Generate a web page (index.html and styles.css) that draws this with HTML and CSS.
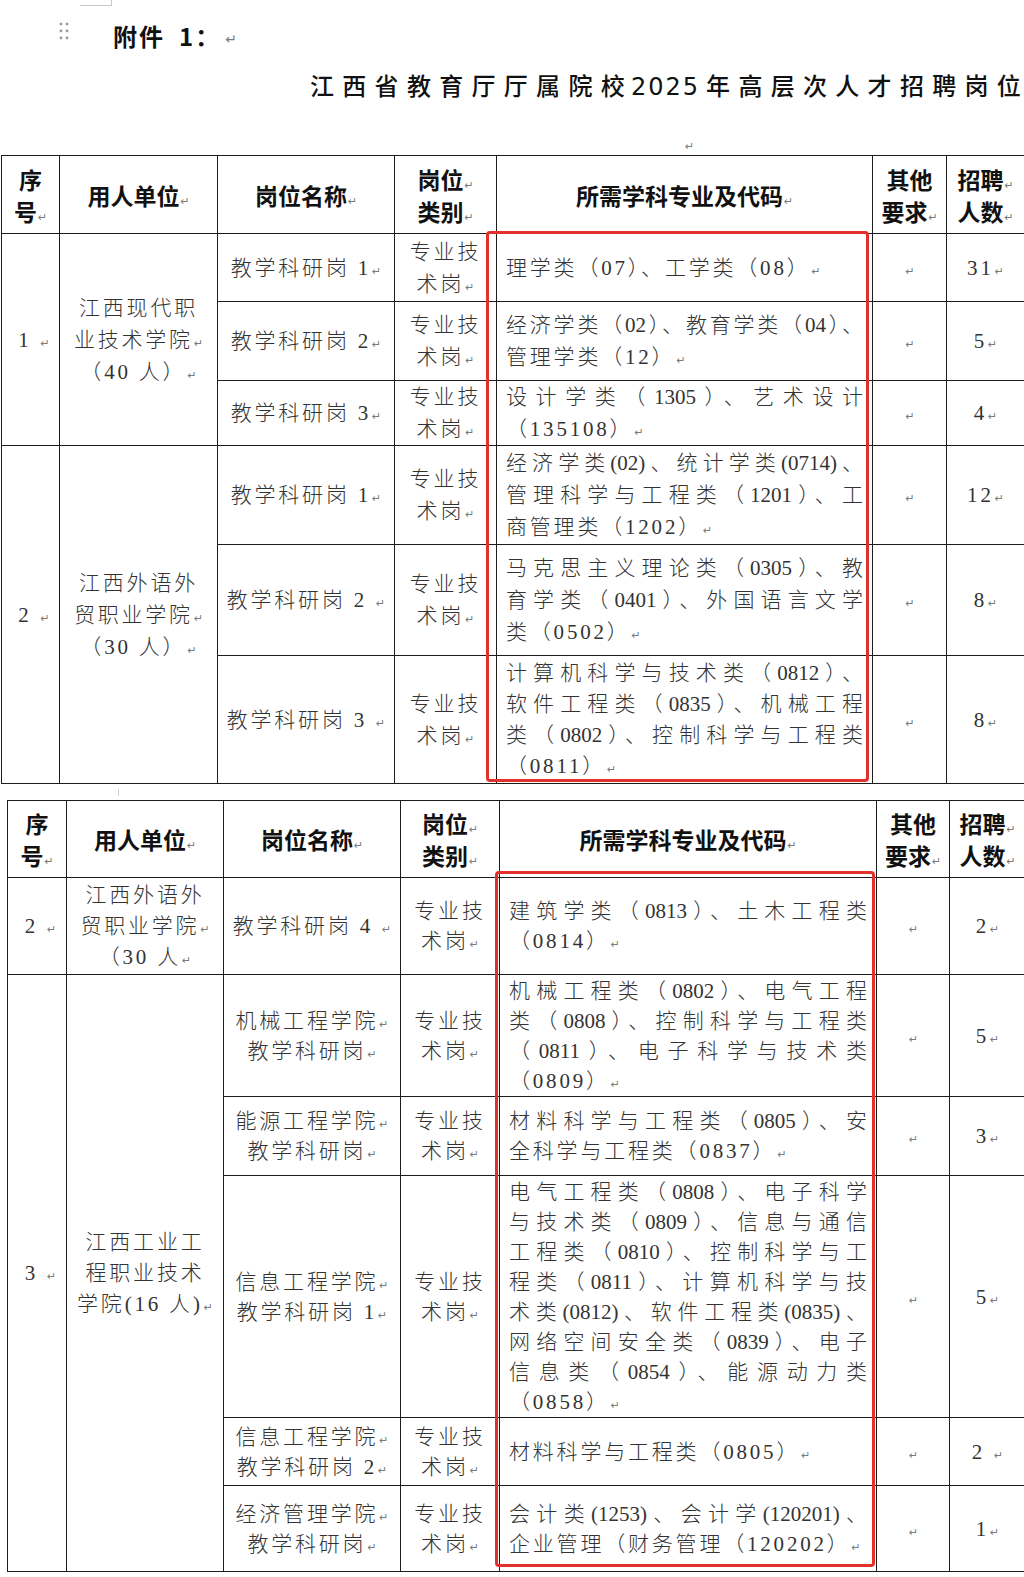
FILE: index.html
```html
<!DOCTYPE html>
<html lang="zh-CN">
<head>
<meta charset="utf-8">
<title>附件 1</title>
<link rel="stylesheet" href="styles.css">
</head>
<body>
<div class="page">
  <div class="corner"></div>
  <div class="annex">
    <svg class="handle" width="10" height="18" viewBox="0 0 10 18"><g fill="#9a9a9a"><circle cx="2" cy="2" r="1.4"/><circle cx="8" cy="2" r="1.4"/><circle cx="2" cy="9" r="1.4"/><circle cx="8" cy="9" r="1.4"/><circle cx="2" cy="16" r="1.4"/><circle cx="8" cy="16" r="1.4"/></g></svg>
    <span class="annex-text">附件&ensp;1：</span><span class="rt big">↵</span>
  </div>
  <div class="title">江西省教育厅厅属院校<span class="yr">2025</span>年高层次人才招聘岗位</div>
  <div class="pmark"><span class="rt">↵</span></div>

  <div class="tblwrap t1">
    <table class="grid">
      <colgroup><col><col><col><col><col><col><col></colgroup>
      <tr class="hd">
        <th>序<br>号<span class="rt">↵</span></th>
        <th>用人单位<span class="rt">↵</span></th>
        <th>岗位名称<span class="rt">↵</span></th>
        <th>岗位<span class="rt">↵</span><br>类别<span class="rt">↵</span></th>
        <th>所需学科专业及代码<span class="rt">↵</span></th>
        <th>其他<br>要求<span class="rt">↵</span></th>
        <th>招聘<span class="rt">↵</span><br>人数<span class="rt">↵</span></th>
      </tr>
      <tr class="ra">
        <td rowspan="3" class="seq">1 <span class="rt">↵</span></td>
        <td rowspan="3">江西现代职<br>业技术学院<span class="rt">↵</span><br>（40 人）<span class="rt">↵</span></td>
        <td>教学科研岗 1<span class="rt">↵</span></td>
        <td>专业技<br>术岗<span class="rt">↵</span></td>
        <td class="subj"><span class="ln">理学类（07）、工学类（08）<span class="rt">↵</span></span></td>
        <td><span class="rt">↵</span></td>
        <td>31<span class="rt">↵</span></td>
      </tr>
      <tr class="rb">
        <td>教学科研岗 2<span class="rt">↵</span></td>
        <td>专业技<br>术岗<span class="rt">↵</span></td>
        <td class="subj"><span class="ln j">经济学类（02）、教育学类（04）、</span><span class="ln">管理学类（12）<span class="rt">↵</span></span></td>
        <td><span class="rt">↵</span></td>
        <td>5<span class="rt">↵</span></td>
      </tr>
      <tr class="rc">
        <td>教学科研岗 3<span class="rt">↵</span></td>
        <td>专业技<br>术岗<span class="rt">↵</span></td>
        <td class="subj"><span class="ln j">设计学类（1305）、艺术设计</span><span class="ln">（135108）<span class="rt">↵</span></span></td>
        <td><span class="rt">↵</span></td>
        <td>4<span class="rt">↵</span></td>
      </tr>
      <tr class="rd">
        <td rowspan="3" class="seq">2 <span class="rt">↵</span></td>
        <td rowspan="3">江西外语外<br>贸职业学院<span class="rt">↵</span><br>（30 人）<span class="rt">↵</span></td>
        <td>教学科研岗 1<span class="rt">↵</span></td>
        <td>专业技<br>术岗<span class="rt">↵</span></td>
        <td class="subj"><span class="ln j">经济学类(02)、统计学类(0714)、</span><span class="ln j">管理科学与工程类（1201）、工</span><span class="ln">商管理类（1202）<span class="rt">↵</span></span></td>
        <td><span class="rt">↵</span></td>
        <td>12<span class="rt">↵</span></td>
      </tr>
      <tr class="re">
        <td>教学科研岗 2 <span class="rt">↵</span></td>
        <td>专业技<br>术岗<span class="rt">↵</span></td>
        <td class="subj"><span class="ln j">马克思主义理论类（0305）、教</span><span class="ln j">育学类（0401）、外国语言文学</span><span class="ln">类（0502）<span class="rt">↵</span></span></td>
        <td><span class="rt">↵</span></td>
        <td>8<span class="rt">↵</span></td>
      </tr>
      <tr class="rf">
        <td>教学科研岗 3 <span class="rt">↵</span></td>
        <td>专业技<br>术岗<span class="rt">↵</span></td>
        <td class="subj"><span class="ln j">计算机科学与技术类（0812）、</span><span class="ln j">软件工程类（0835）、机械工程</span><span class="ln j">类（0802）、控制科学与工程类</span><span class="ln">（0811）<span class="rt">↵</span></span></td>
        <td><span class="rt">↵</span></td>
        <td>8<span class="rt">↵</span></td>
      </tr>
    </table>
    <div class="redbox"></div>
  </div>

  <div class="gap"><span class="tick"></span></div>

  <div class="tblwrap t2">
    <table class="grid">
      <colgroup><col><col><col><col><col><col><col></colgroup>
      <tr class="hd">
        <th>序<br>号<span class="rt">↵</span></th>
        <th>用人单位<span class="rt">↵</span></th>
        <th>岗位名称<span class="rt">↵</span></th>
        <th>岗位<span class="rt">↵</span><br>类别<span class="rt">↵</span></th>
        <th>所需学科专业及代码<span class="rt">↵</span></th>
        <th>其他<br>要求<span class="rt">↵</span></th>
        <th>招聘<span class="rt">↵</span><br>人数<span class="rt">↵</span></th>
      </tr>
      <tr class="sa">
        <td class="seq">2 <span class="rt">↵</span></td>
        <td class="unit2">江西外语外<br>贸职业学院<span class="rt">↵</span><br>（30 人<span class="rt">↵</span></td>
        <td>教学科研岗 4 <span class="rt">↵</span></td>
        <td>专业技<br>术岗<span class="rt">↵</span></td>
        <td class="subj"><span class="ln j">建筑学类（0813）、土木工程类</span><span class="ln">（0814）<span class="rt">↵</span></span></td>
        <td><span class="rt">↵</span></td>
        <td>2<span class="rt">↵</span></td>
      </tr>
      <tr class="sb">
        <td rowspan="5" class="seq">3 <span class="rt">↵</span></td>
        <td rowspan="5" class="unit3">江西工业工<br>程职业技术<br>学院(16 人)<span class="rt">↵</span></td>
        <td>机械工程学院<span class="rt">↵</span><br>教学科研岗<span class="rt">↵</span></td>
        <td>专业技<br>术岗<span class="rt">↵</span></td>
        <td class="subj"><span class="ln j">机械工程类（0802）、电气工程</span><span class="ln j">类（0808）、控制科学与工程类</span><span class="ln j">（0811）、电子科学与技术类</span><span class="ln">（0809）<span class="rt">↵</span></span></td>
        <td><span class="rt">↵</span></td>
        <td>5<span class="rt">↵</span></td>
      </tr>
      <tr class="sc">
        <td>能源工程学院<span class="rt">↵</span><br>教学科研岗<span class="rt">↵</span></td>
        <td>专业技<br>术岗<span class="rt">↵</span></td>
        <td class="subj"><span class="ln j">材料科学与工程类（0805）、安</span><span class="ln">全科学与工程类（0837）<span class="rt">↵</span></span></td>
        <td><span class="rt">↵</span></td>
        <td>3<span class="rt">↵</span></td>
      </tr>
      <tr class="sd">
        <td>信息工程学院<span class="rt">↵</span><br>教学科研岗 1<span class="rt">↵</span></td>
        <td>专业技<br>术岗<span class="rt">↵</span></td>
        <td class="subj"><span class="ln j">电气工程类（0808）、电子科学</span><span class="ln j">与技术类（0809）、信息与通信</span><span class="ln j">工程类（0810）、控制科学与工</span><span class="ln j">程类（0811）、计算机科学与技</span><span class="ln j">术类(0812)、软件工程类(0835)、</span><span class="ln j">网络空间安全类（0839）、电子</span><span class="ln j">信息类（0854）、能源动力类</span><span class="ln">（0858）<span class="rt">↵</span></span></td>
        <td><span class="rt">↵</span></td>
        <td>5<span class="rt">↵</span></td>
      </tr>
      <tr class="se">
        <td>信息工程学院<span class="rt">↵</span><br>教学科研岗 2<span class="rt">↵</span></td>
        <td>专业技<br>术岗<span class="rt">↵</span></td>
        <td class="subj"><span class="ln">材料科学与工程类（0805）<span class="rt">↵</span></span></td>
        <td><span class="rt">↵</span></td>
        <td>2 <span class="rt">↵</span></td>
      </tr>
      <tr class="sf">
        <td>经济管理学院<span class="rt">↵</span><br>教学科研岗<span class="rt">↵</span></td>
        <td>专业技<br>术岗<span class="rt">↵</span></td>
        <td class="subj"><span class="ln j">会计类(1253)、会计学(120201)、</span><span class="ln">企业管理（财务管理（120202）<span class="rt">↵</span></span></td>
        <td><span class="rt">↵</span></td>
        <td>1<span class="rt">↵</span></td>
      </tr>
    </table>
    <div class="redbox"></div>
  </div>
</div>
</body>
</html>
```

FILE: styles.css
```css
html, body {
  margin: 0;
  padding: 0;
  background: #ffffff;
}

body {
  width: 1024px;
  height: 1577px;
  overflow: hidden;
  font-family: "Liberation Serif", "Noto Sans CJK SC", serif;
  color: #2f2f2f;
}

.page {
  width: 1024px;
}

.corner {
  margin-left: 80px;
  width: 31px;
  height: 5px;
  border-right: 1px solid #c9c9c9;
  border-bottom: 1px solid #c9c9c9;
}

.annex {
  display: flex;
  align-items: center;
  height: 58px;
  padding-left: 59px;
}

.handle {
  display: block;
  margin-top: -8px;
}

.annex-text {
  margin-left: 44px;
  font-family: "Noto Sans CJK SC", sans-serif;
  font-weight: 700;
  font-size: 24px;
  letter-spacing: 2px;
  color: #111111;
}

.title {
  height: 42px;
  line-height: 42px;
  padding-left: 310px;
  white-space: nowrap;
  font-family: "Noto Sans CJK SC", sans-serif;
  font-weight: 500;
  font-size: 24px;
  letter-spacing: 8.3px;
  color: #111111;
}

.title .yr {
  font-family: "DejaVu Sans", sans-serif;
  font-weight: 400;
  letter-spacing: 2px;
  margin: 0 6px 0 -2px;
}

.pmark {
  height: 49px;
  display: flex;
  align-items: flex-end;
  padding-left: 684px;
}

.pmark .rt {
  margin-bottom: 8px;
}

.rt {
  font-family: "DejaVu Sans", sans-serif;
  font-weight: 400;
  font-size: 11px;
  line-height: 0;
  letter-spacing: 0;
  color: #7a7a7a;
  margin-left: 1px;
}

.rt.big {
  font-size: 14px;
  margin-left: 4px;
  margin-top: 8px;
}

.tblwrap {
  position: relative;
}

.t1 {
  margin-left: 1px;
}

.t2 {
  margin-left: 7px;
}

.grid {
  border-collapse: collapse;
  table-layout: fixed;
}

.t1 .grid { width: 1023px; }
.t2 .grid { width: 1018px; }

.t1 col:nth-child(1) { width: 58px; }
.t1 col:nth-child(2) { width: 158px; }
.t1 col:nth-child(3) { width: 177px; }
.t1 col:nth-child(4) { width: 102px; }
.t1 col:nth-child(5) { width: 376px; }
.t1 col:nth-child(6) { width: 74px; }
.t1 col:nth-child(7) { width: 78px; }

.t2 col:nth-child(1) { width: 59px; }
.t2 col:nth-child(2) { width: 157px; }
.t2 col:nth-child(3) { width: 177px; }
.t2 col:nth-child(4) { width: 99px; }
.t2 col:nth-child(5) { width: 377px; }
.t2 col:nth-child(6) { width: 73px; }
.t2 col:nth-child(7) { width: 76px; }

.grid th,
.grid td {
  border: 1.5px solid #1c1c1c;
  padding: 0 3px;
  vertical-align: middle;
  text-align: center;
  overflow: hidden;
}

.grid th {
  font-family: "Noto Sans CJK SC", sans-serif;
  font-weight: 700;
  font-size: 23px;
  line-height: 32px;
  color: #111111;
  letter-spacing: 0;
}

.grid td {
  font-size: 21px;
  font-weight: 300;
  letter-spacing: 2.8px;
  color: #333333;
}

.grid td.seq {
  padding-left: 10px;
}

.t1 td { line-height: 32px; }
.t1 .rf td.subj { line-height: 31px; }
.t2 td { line-height: 30px; }
.t2 td.unit2 { line-height: 31px; }
.t2 td.unit3 { line-height: 31px; }

.grid td.subj {
  text-align: left;
  padding: 0 9px;
}

.subj .ln {
  display: block;
  white-space: nowrap;
}

.subj .ln.j {
  white-space: normal;
  letter-spacing: 0;
  text-align: justify;
  text-align-last: justify;
}

.t1 .hd { height: 78px; }
.t2 .hd { height: 77px; }

.ra { height: 68px; }
.rb { height: 79px; }
.rc { height: 65px; }
.rd { height: 99px; }
.re { height: 111px; }
.rf { height: 128px; }

.sa { height: 97px; }
.sb { height: 122px; }
.sc { height: 79px; }
.sd { height: 242px; }
.se { height: 68px; }
.sf { height: 86px; }

.gap {
  height: 11px;
  padding-left: 118px;
}

.tick {
  display: block;
  width: 1px;
  height: 7px;
  margin-top: 5px;
  background: #cfcfcf;
}

.redbox {
  position: absolute;
  box-sizing: border-box;
  border: 3px solid #e2302b;
  border-radius: 4px;
  pointer-events: none;
}

.t1 .redbox {
  left: 485px;
  top: 76px;
  width: 383px;
  height: 551px;
}

.t2 .redbox {
  left: 488px;
  top: 71px;
  width: 380px;
  height: 696px;
}
```
